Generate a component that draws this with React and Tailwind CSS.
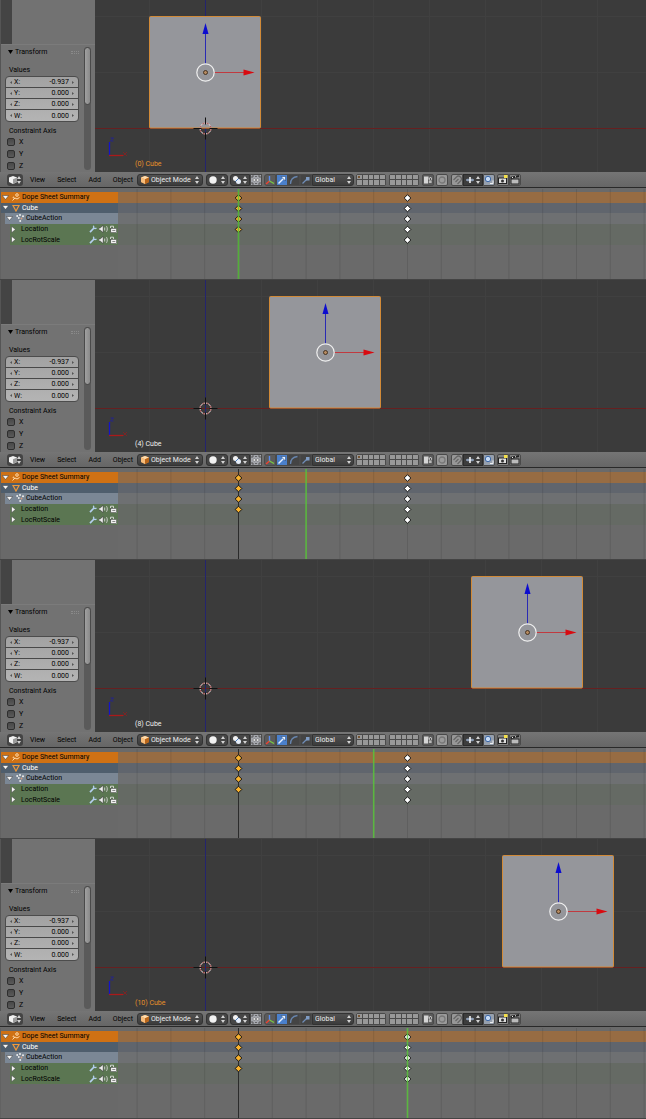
import React from 'react';

const FRAME_ZERO_X = 120;
const FRAME_STEP = 16.9;

const shots = [
  { frame: 0, cubeX: 110, keyed: true, height: 'h-[91px]' },
  { frame: 4, cubeX: 230, keyed: false, height: 'h-[91px]' },
  { frame: 8, cubeX: 432, keyed: false, height: 'h-[90px]' },
  { frame: 10, cubeX: 463, keyed: true, height: 'h-[91px]' },
];

const values = [
  ['X', '-0.937'],
  ['Y', '0.000'],
  ['Z', '0.000'],
  ['W', '0.000'],
];

const menus = ['View', 'Select', 'Add', 'Object'];

const Updown = ({ className = '' }) => (
  <svg className={`h-2 w-1 shrink-0 ${className}`} viewBox="0 0 4 8" fill="#d4d4d4">
    <path d="M0 3 2 0 4 3zM0 5h4L2 8z" />
  </svg>
);

const TransformPanel = ({ id }) => (
  <aside className="flex h-[172px] w-[95px] shrink-0 flex-col border-l border-[#555] bg-[#727272] text-black">
    <div className="h-11 shrink-0">
      <div className="h-full w-[11px] bg-[#444]" />
    </div>
    <div className="flex flex-1 justify-between border-t border-[#7b7b7b] pr-1">
      <div className="flex w-[78px] flex-col pl-1">
        <button className="mt-[2px] flex h-[10px] items-center gap-[2px] pl-[3px]">
          <svg className="h-1 w-[5px]" viewBox="0 0 5 4">
            <path d="M0 0h5L2.500 4z" />
          </svg>
          Transform
          <span className="ml-auto h-[3px] w-2 border-y border-dotted border-[#8a8a8a]" />
        </button>
        <h3 className="mt-2 pl-1">Values</h3>
        <div className="mt-px overflow-hidden rounded-[4px] border border-[#4c4c4c] bg-linear-to-b from-[#a2a2a2] to-[#b4b4b4]">
          {values.map(([axis, value]) => (
            <div
              key={axis}
              className="flex h-[11px] items-center border-b border-[#484848] px-1 last:border-b-0"
            >
              <svg className="h-[3px] w-[2px]" viewBox="0 0 2 3" fill="#555">
                <path d="M2 0v3L0 1.500z" />
              </svg>
              <label htmlFor={`${id}-value-${axis}`} className="ml-[2px]">{axis}:</label>
              <input
                id={`${id}-value-${axis}`}
                defaultValue={value}
                className="mr-[3px] h-[10px] w-0 min-w-0 flex-1 bg-transparent text-right outline-none"
              />
              <svg className="h-[3px] w-[2px]" viewBox="0 0 2 3" fill="#555">
                <path d="M0 0v3L2 1.500z" />
              </svg>
            </div>
          ))}
        </div>
        <h3 className="mt-1 whitespace-nowrap pl-1">Constraint Axis</h3>
        <div className="mt-px flex flex-col gap-[2px] pl-[2px]">
          {['X', 'Y', 'Z'].map((axis) => (
            <label key={axis} className="flex h-[10px] items-center gap-1">
              <input
                type="checkbox"
                className="size-2 appearance-none rounded-[2px] border border-[#2e2e2e] bg-linear-to-b from-[#484848] to-[#5a5a5a]"
              />
              {axis}
            </label>
          ))}
        </div>
      </div>
      <div className="mt-[2px] mb-[2px] w-[7px] rounded-full bg-[#5a5a5a]">
        <div className="h-[58px] rounded-full border border-[#4a4a4a] bg-linear-to-r from-[#a0a0a0] to-[#8a8a8a]" />
      </div>
    </div>
  </aside>
);

const Viewport = ({ frame, cubeX, keyed }) => (
  <div className="relative min-w-0 flex-1 overflow-hidden bg-[#3b3b3b]">
    <svg className="block h-full w-full">
      <g stroke="#404040">
        {[54, 166, 222, 278, 334, 390, 446, 502].map((x) => (
          <line key={x} x1={x + 0.5} x2={x + 0.5} y1="0" y2="100%" />
        ))}
        {[16, 72].map((y) => (
          <line key={y} x1="0" x2="100%" y1={y + 0.5} y2={y + 0.5} />
        ))}
      </g>
      <line x1="0" x2="100%" y1="128.500" y2="128.500" stroke="#662020" />
      <line x1="110.500" x2="110.500" y1="0" y2="100%" stroke="#24246e" />

      {/* Cube with its manipulator */}
      <g transform={`translate(${cubeX} 72)`}>
        <rect x="-55.500" y="-55.500" width="111" height="111.500" rx="1" fill="#95969b" stroke="#d18a38" />
        <path d="M0.500 -8v-31" stroke="#2a2ab4" />
        <path d="M0.500 -49l3 11h-6z" fill="#0c0ccf" />
        <path d="M9 0.500h31" stroke="#c03a40" />
        <path d="M49.500 0.500l-11 -3v6z" fill="#d80a10" />
        <circle cx="0.500" cy="0.500" r="8.700" fill="none" stroke="#f0f0f0" strokeWidth="1.200" />
        <circle cx="0.500" cy="0.500" r="2" fill="#b58a60" stroke="#3c2a1a" strokeWidth="0.900" />
      </g>

      {/* 3D cursor */}
      <g transform="translate(110.500 128.500)" fill="none">
        <circle r="5.500" stroke="#f0e4e4" />
        <circle r="5.500" stroke="#a04040" strokeDasharray="2.200 2.200" />
        <path d="M-12 0h8M4 0h8M0 -11v7M0 4v7" stroke="#111" />
      </g>

      {/* View axis */}
      <path d="M14.500 156v-14" stroke="#1414c8" strokeWidth="1.300" />
      <path d="M15.500 138h3l-3 3h3" stroke="#2020a0" fill="none" strokeWidth="0.800" />
      <path d="M14 155.500h14" stroke="#aa1a1a" strokeWidth="1.300" />
      <path d="M28 152l4 4M32 152l-4 4" stroke="#8a2020" strokeWidth="0.800" />
    </svg>
    <p className={`absolute bottom-[3px] left-10 ${keyed ? 'text-[#e8922a]' : 'text-[#f0f0f0]'}`}>
      ({frame}) Cube
    </p>
  </div>
);

const LayerGrid = ({ dot }) => (
  <div className="grid h-3 w-[30px] shrink-0 grid-cols-5 grid-rows-2 gap-px rounded-[2px] border border-[#4a4a4a] bg-[#4a4a4a]">
    {Array.from({ length: 10 }, (_, i) => (
      <button key={i} aria-label={`Layer ${i + 1}`} className="flex items-center justify-center bg-[#989898]">
        {dot && i === 0 && <span className="size-[2px] rounded-full bg-[#6b3f12]" />}
      </button>
    ))}
  </div>
);

const IconButton = ({ label, className = 'bg-[#8f8f8f]', children }) => (
  <button
    aria-label={label}
    className={`flex h-3 w-3 shrink-0 items-center justify-center border border-[#4a4a4a] ${className}`}
  >
    <svg className="size-[10px] shrink-0" viewBox="0 0 10 10" fill="none">
      {children}
    </svg>
  </button>
);

const HeaderBar = () => (
  <header className="flex h-4 items-center overflow-hidden border-b border-[#292929] bg-linear-to-b from-[#757575] to-[#666] pl-[7px] text-black">
    <button
      aria-label="Editor type"
      className="flex h-3 w-4 shrink-0 items-center justify-between rounded-[3px] bg-[#444] px-[2px]"
    >
      <svg className="size-2" viewBox="0 0 8 8">
        <path d="M0 1.500 4 0l4 1.500V6L4 8 0 6z" fill="#f2f2f2" />
        <path d="M4 3.300 8 1.500V6L4 8z" fill="#9b9b9b" />
      </svg>
      <Updown />
    </button>
    <nav className="ml-[7px] flex w-[107px] shrink-0 gap-3">
      {menus.map((menu) => (
        <button key={menu}>{menu}</button>
      ))}
    </nav>
    <div className="relative flex h-3 w-[66px] shrink-0 items-center rounded-[3px] border border-[#333] bg-linear-to-b from-[#515151] to-[#3c3c3c] px-[3px] text-[#eee]">
      <svg className="size-2 shrink-0" viewBox="0 0 8 8">
        <path d="M0 1.500 4 0l4 1.500V6L4 8 0 6z" fill="#e8953a" />
        <path d="M0 1.500 4 0l4 1.500L4 3.300z" fill="#ffdcae" />
        <path d="M0 1.500 4 3.300V8L0 6z" fill="#f7bd7c" />
        <path d="M4 3.300 8 1.500V6L4 8z" fill="#b8651a" />
      </svg>
      <select aria-label="Mode" className="ml-[2px] h-[10px] min-w-0 flex-1 appearance-none bg-transparent outline-none">
        <option>Object Mode</option>
      </select>
      <Updown />
    </div>
    <button
      aria-label="Viewport shading"
      className="ml-[3px] flex h-3 w-[22px] shrink-0 items-center justify-between rounded-[3px] border border-[#333] bg-[#464646] px-[2px]"
    >
      <svg className="size-2" viewBox="0 0 8 8">
        <circle cx="4" cy="4" r="3.700" fill="#f2f2f2" />
      </svg>
      <Updown />
    </button>
    <button
      aria-label="Pivot point"
      className="ml-[2px] flex h-3 w-5 shrink-0 items-center justify-between rounded-l-[3px] border border-[#333] bg-[#464646] px-[2px]"
    >
      <svg className="size-2" viewBox="0 0 8 8">
        <circle cx="2.500" cy="2.500" r="2.500" fill="#f2f2f2" />
        <circle cx="5.500" cy="5.500" r="2.500" fill="#e6eefa" />
        <path d="M2.500 5.500 5.500 2.500" stroke="#4a7fc4" />
      </svg>
      <Updown />
    </button>
    <IconButton label="Manipulate center points" className="bg-[#a4a6ac]">
      <path d="M1 3V1h2M7 1h2v2M9 7v2H7M3 9H1V7M4.200 1.500h1.600M4.200 8.500h1.600" stroke="#555" />
      <circle cx="3.300" cy="5" r="1.300" fill="#f4f4f4" stroke="#555" strokeWidth="0.500" />
      <circle cx="6.700" cy="5" r="1.300" fill="#f4f4f4" stroke="#555" strokeWidth="0.500" />
    </IconButton>
    <div className="ml-[2px] flex shrink-0">
      <IconButton label="Manipulator" className="rounded-l-[3px] bg-[#5b5b5b]">
        <path d="M4.500 6V1" stroke="#5a8cf0" strokeWidth="1.400" />
        <path d="M4.500 6 1 9" stroke="#f04030" strokeWidth="1.400" />
        <path d="M4.500 6 9 8.500" stroke="#78c840" strokeWidth="1.400" />
      </IconButton>
      <IconButton label="Translate" className="bg-[#4a80cc]">
        <path d="M1.500 8.500 6.500 3.500" stroke="#e8f2ff" strokeWidth="1.400" />
        <path d="M4 1.500h4.500V6z" fill="#e8f2ff" stroke="#1c3a66" strokeWidth="0.500" />
      </IconButton>
      <IconButton label="Rotate" className="bg-[#444]">
        <path d="M1.500 9C1.500 4.500 4 2 8.500 1.500" stroke="#6784ac" strokeWidth="1.300" />
      </IconButton>
      <IconButton label="Scale" className="bg-[#444]">
        <path d="M1.500 8.500 6 4" stroke="#6f8db8" strokeWidth="1.300" />
        <rect x="5" y="2" width="3.500" height="3.500" fill="#7f9cc4" />
      </IconButton>
    </div>
    <div className="flex h-3 w-[42px] shrink-0 items-center rounded-r-[3px] border border-[#333] bg-linear-to-b from-[#515151] to-[#3c3c3c] px-[2px] text-[#eee]">
      <select aria-label="Orientation" className="h-[10px] min-w-0 flex-1 appearance-none bg-transparent outline-none">
        <option>Global</option>
      </select>
      <Updown />
    </div>
    <div className="ml-[2px] flex shrink-0 gap-[3px]">
      <LayerGrid dot />
      <LayerGrid />
    </div>
    <div className="ml-[3px] flex shrink-0">
      <IconButton label="Lock camera and layers" className="rounded-[2px] bg-[#5a5a5a]">
        <rect x="1" y="1.500" width="4.500" height="7" fill="#d4d4d4" />
        <path d="M6.500 5V3.500a1 1 0 0 1 2 0V7" stroke="#ddd" />
        <rect x="5.500" y="5" width="3.500" height="3.500" fill="#b8b8b8" stroke="#333" strokeWidth="0.500" />
      </IconButton>
    </div>
    <div className="ml-[2px] flex shrink-0">
      <IconButton label="Proportional editing" className="rounded-[2px] bg-[#9a9a9a]">
        <circle cx="5" cy="5" r="3" stroke="#777" strokeWidth="1.300" />
      </IconButton>
    </div>
    <div className="ml-[3px] flex shrink-0">
      <IconButton label="Snap" className="rounded-l-[2px] bg-[#979797]">
        <path d="M1.500 5 4.500 2A2.800 2.800 0 0 1 8.500 6L5.500 9M3.500 7 6.500 4" stroke="#666" strokeWidth="1.200" />
      </IconButton>
      <button
        aria-label="Snap element"
        className="flex h-3 w-5 shrink-0 items-center justify-between border border-[#2c2c2c] bg-[#3d3d3d] px-[2px]"
      >
        <svg className="size-2" viewBox="0 0 8 8" fill="none" stroke="#b9d2f5">
          <path d="M0 4h8" />
          <path d="M2 2.500v3M6 2.500v3" strokeWidth="0.600" />
          <path d="M4 1v6" stroke="#fff" strokeWidth="1.500" />
        </svg>
        <Updown />
      </button>
      <IconButton label="Snap target" className="rounded-r-[2px] bg-[#96a0ae]">
        <circle cx="4" cy="4" r="2.700" fill="#c7dbf5" stroke="#3c68a8" />
        <path d="M6 8.500h3V5.500" stroke="#eee" />
      </IconButton>
    </div>
    <div className="ml-[2px] flex shrink-0">
      <IconButton label="Render" className="rounded-l-[2px] bg-[#808080]">
        <rect x="0.500" y="3" width="8" height="5.500" fill="#ddd" stroke="#222" />
        <circle cx="4.500" cy="6" r="1.500" fill="#333" />
        <rect x="6" y="0" width="3.500" height="3" fill="#f5e04a" />
      </IconButton>
      <IconButton label="Render animation" className="rounded-r-[2px] bg-[#808080]">
        <rect x="1" y="4" width="8" height="5" fill="#bbb" stroke="#222" />
        <path d="M0.500 3 9 1" stroke="#222" strokeWidth="1.800" />
        <path d="M2 2.500l1 0M5 1.800l1 0" stroke="#eee" />
      </IconButton>
    </div>
  </header>
);

const Caret = ({ open }) => (
  <svg className="size-[7px] shrink-0" viewBox="0 0 7 7" fill="#f6f6f6" stroke="#3a3a3a" strokeWidth="0.500">
    {open ? <path d="M0.300 1.500h6.400L3.500 5.500z" /> : <path d="M1.500 0.300v6.400L5.500 3.500z" />}
  </svg>
);

const ChannelTools = () => (
  <span className="ml-auto flex items-center gap-[2px] pr-px">
    <button aria-label="Modifiers">
      <svg className="block size-2" viewBox="0 0 8 8" fill="none" stroke="#b5d0f0">
        <path d="M1 7.200 5 3" strokeWidth="1.700" />
        <path d="M5 0.800C3.500 2.500 5.500 4.500 7.500 3" strokeWidth="1.300" />
      </svg>
    </button>
    <button aria-label="Mute">
      <svg className="block h-2 w-[9px]" viewBox="0 0 9 8" fill="none" stroke="#d6d6d6">
        <path d="M0 2.700h1.500L4.200 0.300v7.400L1.500 5.300H0z" fill="#f0f0f0" stroke="#222" strokeWidth="0.500" />
        <path d="M5.700 2.500v3M7.500 1.200c1 1.500 1 4 0 5.600" strokeWidth="0.900" />
      </svg>
    </button>
    <button aria-label="Lock">
      <svg className="block h-2 w-[7px]" viewBox="0 0 7 8">
        <path d="M0.500 3V1.200h3V3.500" fill="none" stroke="#ddd" strokeWidth="0.900" />
        <rect x="0.800" y="3.300" width="5.900" height="4.400" fill="#f2f2f2" stroke="#333" strokeWidth="0.500" />
        <path d="M2.300 5.500h3" stroke="#888" />
      </svg>
    </button>
  </span>
);

const ChannelList = () => (
  <div className="grid h-[53px] grid-rows-5 text-black">
    <div className="flex items-center bg-[#cf7114] pl-[1px]">
      <Caret open />
      <svg className="mr-[2px] ml-[3px] size-2" viewBox="0 0 8 8" fill="none" stroke="#ffd9a8">
        <path d="M0.500 7.500 3 5l2 1 2.500-1.500" />
        <circle cx="5" cy="2" r="1.300" />
        <circle cx="1.500" cy="4.500" r="0.500" />
      </svg>
      Dope Sheet Summary
    </div>
    <div className="flex items-center bg-[#4f5e6d] pl-[1px] text-white">
      <Caret open />
      <svg className="mr-[2px] ml-[3px] size-2" viewBox="0 0 8 8" fill="none" stroke="#f09a3c">
        <path d="M1 1.500h6L4 7z" strokeWidth="1.200" />
      </svg>
      Cube
    </div>
    <div className="ml-[4px] flex items-center bg-[#7b8795] pl-[1px]">
      <Caret open />
      <svg className="mr-[2px] ml-[3px] size-2" viewBox="0 0 8 8" fill="#eee">
        <circle cx="1.200" cy="2" r="1" />
        <circle cx="4" cy="1" r="1" />
        <circle cx="7" cy="2.200" r="1" />
        <circle cx="2.800" cy="4" r="0.900" />
        <circle cx="5.500" cy="4.500" r="0.900" fill="#d8a080" />
        <circle cx="4.200" cy="7" r="1" />
      </svg>
      CubeAction
    </div>
    {['Location', 'LocRotScale'].map((name) => (
      <div key={name} className="ml-[9px] flex items-center bg-[#5b7652]">
        <Caret />
        <span className="ml-[4px]">{name}</span>
        <ChannelTools />
      </div>
    ))}
  </div>
);

const Key = ({ x, row, fill }) => (
  <path
    transform={`translate(${x} ${9 + row * 10.5})`}
    d="M0 -3.300 3.300 0 0 3.300 -3.300 0z"
    fill={fill}
    stroke="#161616"
    strokeWidth="1"
  />
);

const Timeline = ({ frame }) => {
  const frameX = (f) => FRAME_ZERO_X + 0.5 + f * FRAME_STEP;
  return (
    <div className="relative min-w-0 flex-1 bg-[#6a6a6a] pt-[3px]">
      <div className="grid h-[53px] grid-rows-5">
        <div className="bg-[#976c43]" />
        <div className="bg-[#60656d]" />
        <div className="bg-[#6e7072]" />
        <div className="bg-[#656a64]" />
        <div className="bg-[#656a64]" />
      </div>
      <svg className="absolute inset-0 h-full w-full">
        {Array.from({ length: 16 }, (_, i) => (
          <line
            key={i}
            x1={frameX(i * 2 - 6)}
            x2={frameX(i * 2 - 6)}
            y1="0"
            y2="100%"
            stroke="#000"
            strokeOpacity="0.100"
          />
        ))}
        <line x1={frameX(0)} x2={frameX(0)} y1="0" y2="100%" stroke="#2b2b2b" />
        {[0, 1, 2, 3].map((row) => (
          <Key key={row} x={frameX(0)} row={row} fill="#fbb32c" />
        ))}
        {[0, 1, 2, 3, 4].map((row) => (
          <Key key={row} x={frameX(10)} row={row} fill="#fff" />
        ))}
        <line
          x1={frameX(frame)}
          x2={frameX(frame)}
          y1="0"
          y2="100%"
          stroke="#5ac63c"
          strokeWidth="1.600"
          strokeOpacity="0.850"
        />
      </svg>
    </div>
  );
};

const Shot = ({ frame, cubeX, keyed, height }) => (
  <section>
    <div className="flex">
      <TransformPanel id={`frame-${frame}`} />
      <Viewport frame={frame} cubeX={cubeX} keyed={keyed} />
    </div>
    <HeaderBar />
    <div className="bg-[#6a6a6a] pt-px">
      <div className={`flex border-b border-[#444] ${height}`}>
        <div className="w-[118px] shrink-0 border-l border-[#626262] bg-[#696969] pt-[3px]">
          <ChannelList />
        </div>
        <Timeline frame={frame} />
      </div>
    </div>
  </section>
);

const App = () => (
  <main className="w-full bg-[#3b3b3b] font-[Roboto,'Noto_Sans',sans-serif] text-[7px] leading-[10px]">
    {shots.map((shot) => (
      <Shot key={shot.frame} {...shot} />
    ))}
  </main>
);

export default App;
